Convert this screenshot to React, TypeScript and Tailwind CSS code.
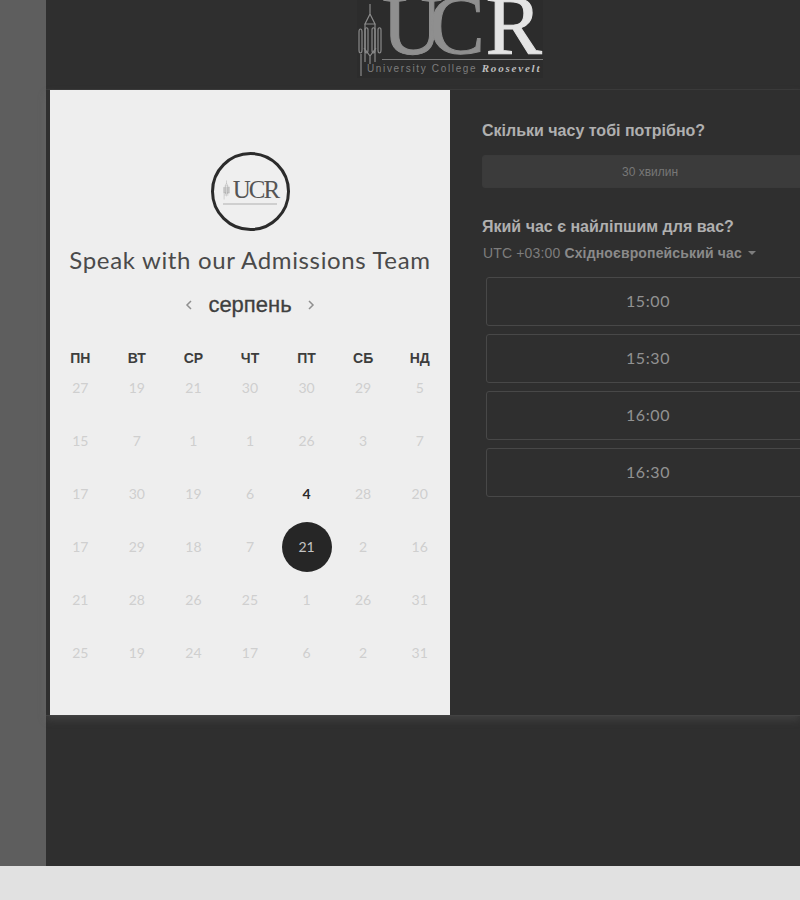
const rows = [
  ["27", "19", "21", "30", "30", "29", "5"],
  ["15", "7", "1", "1", "26", "3", "7"],
  ["17", "30", "19", "6", "4", "28", "20"],
  ["17", "29", "18", "7", "21", "2", "16"],
  ["21", "28", "26", "25", "1", "26", "31"],
  ["25", "19", "24", "17", "6", "2", "31"],
];
const days = ["ПН", "ВТ", "СР", "ЧТ", "ПТ", "СБ", "НД"];
const times = ["15:00", "15:30", "16:00", "16:30"];

function Tower({ className }: { className: string }) {
  return (
    <svg viewBox="0 0 26 76" fill="none" stroke="currentColor" strokeWidth="1.2" className={className}>
      <path d="M13 2V12M13 12L8 22H18L13 12M8 22V60M18 22V60" />
      <path d="M2 30C2 26 5 26 5 30V48C5 52 2 52 2 48ZM8 28C8 25 11 25 11 28V48C11 52 8 52 8 48ZM15 28C15 25 18 25 18 28V48C18 52 15 52 15 48ZM21 28C21 25 24 25 24 28V48C24 52 21 52 21 48Z" />
      <path d="M7 46L13 54L19 46M13 54V62M4 52V74" />
    </svg>
  );
}

export default function App() {
  return (
    <div className="w-[800px] h-[900px] bg-[#e1e1e1] overflow-hidden font-['Liberation_Sans',sans-serif]">
      <div className="flex h-[866px]">
        <div className="w-[46px] bg-[#5e5e5e]" />
        <div className="w-[754px] bg-[#2f2f2f] flex flex-col">
          <header className="h-[90px] border-b border-[#383838] flex justify-center">
            <div className="relative w-[186px] h-[78px] ml-[54px] overflow-hidden bg-[#2c2c2c]">
              <Tower className="absolute left-[0px] top-[2px] w-[26px] h-[76px] text-[#8a8a8a]" />
              <div className="absolute left-[25px] top-[-7px] h-[66px] flex text-[84px] leading-[66px] font-['Liberation_Serif',serif] tracking-[-14px]">
                <span className="text-[#8f8f8f] [-webkit-text-stroke:1px_#8f8f8f]">UC</span>
                <span className="text-[#e4e4e4] ml-[15px] tracking-normal [-webkit-text-stroke:1px_#e4e4e4]">R</span>
              </div>
              <div className="absolute left-[25px] right-[0px] top-[59px] h-px bg-[#7a7a7a]" />
              <div className="absolute left-[10px] top-[62px] h-[12px] whitespace-nowrap text-[10px] leading-[12px] tracking-[1.65px] text-[#7d7d7d] font-['Liberation_Sans',sans-serif]">
                University College <span className="font-['Liberation_Serif',serif] italic font-bold text-[11px] text-[#bdbdbd] tracking-[1.8px]">Roosevelt</span>
              </div>
            </div>
          </header>
          <div className="flex h-[626px] border-b border-[#424242] shadow-[0_4px_8px_rgba(120,120,120,0.25)]">
            <section className="w-[404px] pl-[4px] h-full">
              <div className="w-[400px] h-full bg-[#eeeeee] pt-[62px] flex flex-col items-center">
                <div className="w-[79px] h-[79px] rounded-full border-[3px] border-[#2b2b2b] flex items-center justify-center bg-[#efefef]">
                  <div className="flex flex-col items-center mt-[-2px]">
                    <div className="flex items-center">
                      <Tower className="w-[9px] h-[20px] text-[#8a8a8a]" />
                      <span className="text-[25px] leading-[26px] tracking-[-2px] text-[#555555] font-['Liberation_Serif',serif] ml-[2px]">UCR</span>
                    </div>
                    <span className="block w-[54px] h-[2px] bg-[#cfcfcf]" />
                  </div>
                </div>
                <h1 className="mt-[13px] text-[24px] leading-[32px] font-normal text-[#4a4a4a] font-['Lato',sans-serif] tracking-[0.65px] whitespace-nowrap">
                  Speak with our Admissions Team
                </h1>
                <div className="mt-[13px] h-[32px] flex items-center gap-[15px] text-[#3f3f3f]">
                  <svg viewBox="0 0 8 10" className="w-[8px] h-[10px] text-[#8f8f8f]" fill="none" stroke="currentColor" strokeWidth="1.5"><path d="M6 1L2 5L6 9" /></svg>
                  <span className="text-[22px] leading-[32px] [-webkit-text-stroke:0.3px_#3f3f3f]">серпень</span>
                  <svg viewBox="0 0 8 10" className="w-[8px] h-[10px] text-[#8f8f8f]" fill="none" stroke="currentColor" strokeWidth="1.5"><path d="M2 1L6 5L2 9" /></svg>
                </div>
                <div className="mt-[23px] w-[396px] grid grid-cols-7">
                  {days.map((d) => (
                    <div key={d} className="h-[28px] flex items-center justify-center text-[14px] font-bold text-[#3d3d3d]">{d}</div>
                  ))}
                </div>
                <div className="w-[396px] grid grid-cols-7 auto-rows-[53px] mt-[-11px]">
                  {rows.flat().map((n, i) => {
                    const selected = i === 25;
                    const active = i === 18;
                    return (
                      <div key={i} className="flex items-center justify-center font-['Lato',sans-serif] text-[14px]">
                        {selected ? (
                          <span className="w-[50px] h-[50px] rounded-full bg-[#262626] text-[#c4c4c4] flex items-center justify-center">{n}</span>
                        ) : (
                          <span className={active ? "text-[#2a2a2a] font-bold" : "text-[#cfcfcf]"}>{n}</span>
                        )}
                      </div>
                    );
                  })}
                </div>
              </div>
            </section>
            <section className="w-[350px] pl-[32px] pt-[31px] overflow-hidden">
              <h2 className="text-[16px] leading-[20px] font-bold text-[#b0b0b0] whitespace-nowrap">Скільки часу тобі потрібно?</h2>
              <div className="mt-[14px] w-[340px] h-[33px] rounded-[3px] border border-[#3a3a3a] bg-[#3b3b3b] flex items-center justify-center text-[12px] text-[#777777]">
                <span className="mr-[4px]">30 хвилин</span>
              </div>
              <h2 className="mt-[29px] text-[16px] leading-[20px] font-bold text-[#b0b0b0] whitespace-nowrap">Який час є найліпшим для вас?</h2>
              <div className="mt-[7px] ml-[1px] h-[18px] flex items-center text-[14px] text-[#7d7d7d] whitespace-nowrap tracking-[0.15px]">
                UTC +03:00&nbsp;<span className="font-bold text-[#8a8a8a]">Східноєвропейський час</span>
                <svg viewBox="0 0 8 4" className="w-[8px] h-[4px] ml-[6px] text-[#7d7d7d]" fill="currentColor"><path d="M0 0H8L4 4Z" /></svg>
              </div>
              <div className="mt-[15px] ml-[4px] w-[330px] flex flex-col gap-[8px]">
                {times.map((t) => (
                  <div key={t} className="h-[49px] rounded-[3px] border border-[#484848] flex items-center justify-center text-[16px] text-[#929292] tracking-[0.6px] font-['Lato',sans-serif] pr-[6px] pb-[2px]">
                    {t}
                  </div>
                ))}
              </div>
            </section>
          </div>
          <div className="flex-1" />
        </div>
      </div>
    </div>
  );
}
